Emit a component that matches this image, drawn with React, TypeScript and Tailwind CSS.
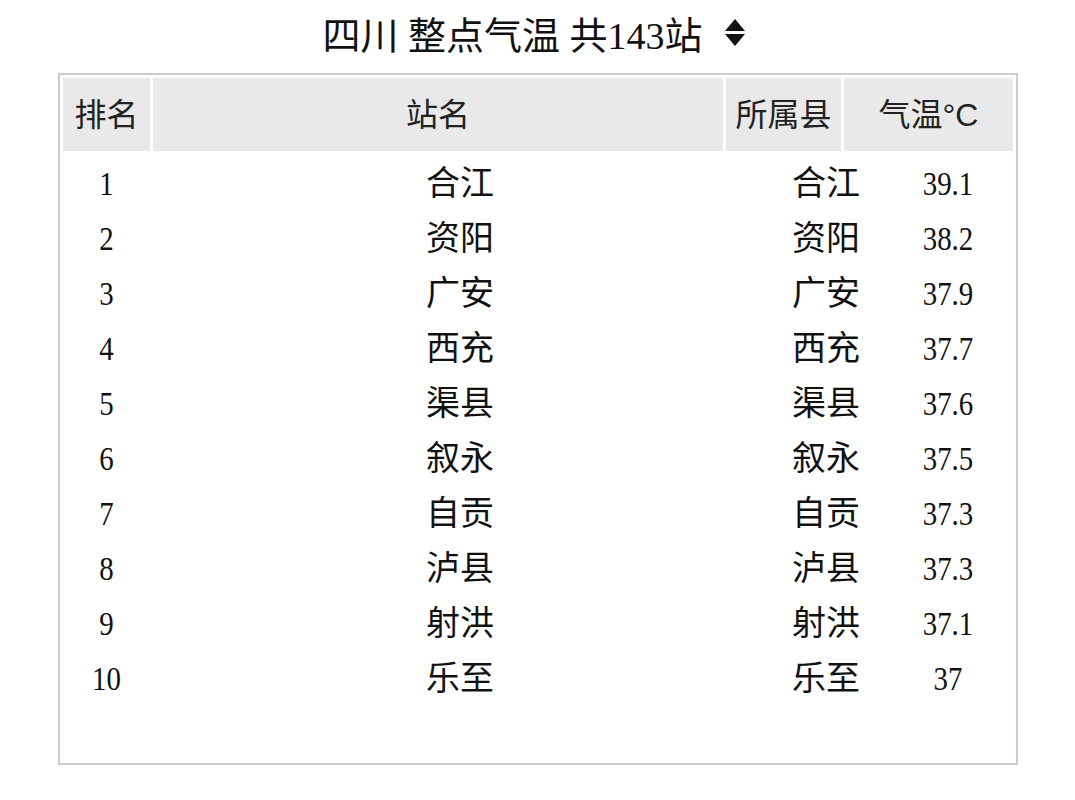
import React from "react";

const rows: [number, string, string, string][] = [
  [1, "合江", "合江", "39.1"],
  [2, "资阳", "资阳", "38.2"],
  [3, "广安", "广安", "37.9"],
  [4, "西充", "西充", "37.7"],
  [5, "渠县", "渠县", "37.6"],
  [6, "叙永", "叙永", "37.5"],
  [7, "自贡", "自贡", "37.3"],
  [8, "泸县", "泸县", "37.3"],
  [9, "射洪", "射洪", "37.1"],
  [10, "乐至", "乐至", "37"],
];

const serifCJK = { fontFamily: '"Liberation Serif", "Noto Sans CJK SC", serif' };
const sansCJK = { fontFamily: '"Liberation Sans", "Noto Sans CJK SC", sans-serif' };

export default function App() {
  return (
    <div className="w-[1075px] h-[800px] bg-white text-[#111] overflow-hidden">
      <div className="h-[73px] flex items-center justify-center pr-[8px] pb-[2px]">
        <div className="flex items-center gap-[22px]">
          <span className="text-[38px] leading-none" style={serifCJK}>
            四川 整点气温 共143站
          </span>
          <svg width="20" height="28" viewBox="0 0 20 28" className="mb-[6px]">
            <polygon points="10,0 20,12 0,12" fill="#111" />
            <polygon points="0,15 20,15 10,27" fill="#111" />
          </svg>
        </div>
      </div>
      <div className="ml-[58px] w-[960px] h-[692px] border-2 border-[#c9ccd3] p-[3px]">
        <div className="flex gap-[3px] h-[73px] text-[32px] text-[#222]" style={sansCJK}>
          <div className="w-[87px] bg-[#e9e9e9] flex items-center justify-center">排名</div>
          <div className="w-[570px] bg-[#e9e9e9] flex items-center justify-center">站名</div>
          <div className="w-[115px] bg-[#e9e9e9] flex items-center justify-center">所属县</div>
          <div className="flex-1 bg-[#e9e9e9] flex items-center justify-center">气温°C</div>
        </div>
        <div className="mt-[5px]" style={serifCJK}>
          {rows.map(([rank, name, county, temp]) => (
            <div
              key={rank}
              className="grid grid-cols-[87px_620px_113px_1fr] h-[55px] items-center"
            >
              <div className="text-center text-[34px] leading-none scale-x-[0.85]">{rank}</div>
              <div className="text-center text-[34px] leading-none">{name}</div>
              <div className="text-right pr-[23px] text-[34px] leading-none">{county}</div>
              <div className="text-center text-[34px] leading-none scale-x-[0.85]">{temp}</div>
            </div>
          ))}
        </div>
      </div>
    </div>
  );
}
